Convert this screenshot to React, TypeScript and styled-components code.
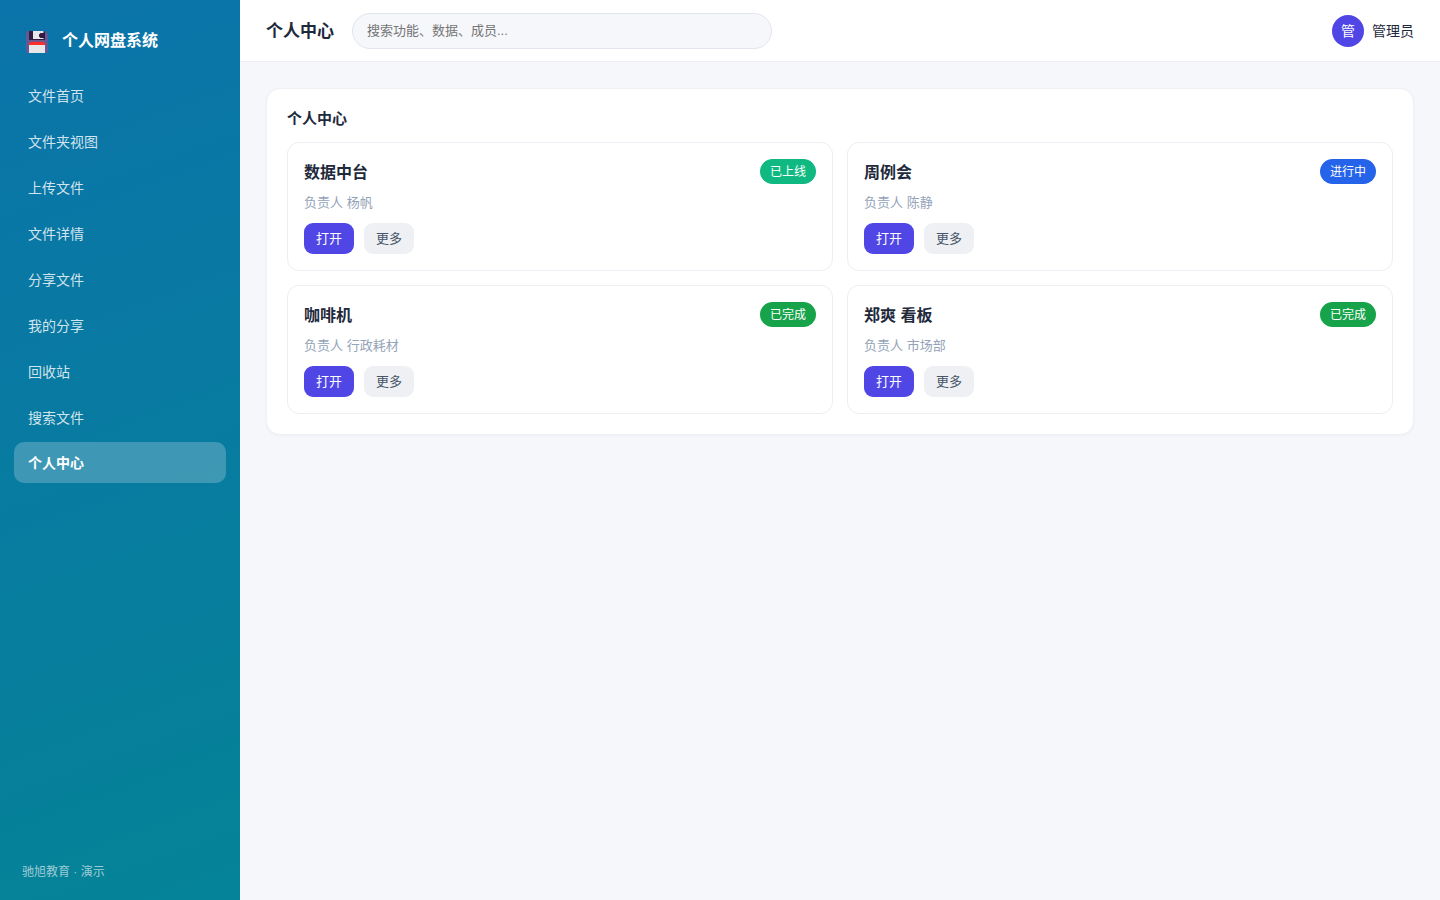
import React from "react";
import styled, { createGlobalStyle } from "styled-components";

const GlobalStyle = createGlobalStyle`
  *, *::before, *::after { box-sizing: border-box; }
  body {
    margin: 0;
    background: #f5f7fb;
    color: #1e293b;
    font-family: "Liberation Sans", "Noto Sans CJK SC", sans-serif;
    font-size: 14px;
    line-height: 20px;
  }
  button, input { font-family: inherit; }
  h1, h2, h3, p, ul { margin: 0; padding: 0; }
`;

const Shell = styled.div`
  display: flex;
  min-height: 100vh;
`;

const Sidebar = styled.aside`
  display: flex;
  flex-direction: column;
  flex: 0 0 240px;
  padding: 22px 14px 18px;
  background: linear-gradient(160deg, #0b74aa, #058397);
  color: #fff;
`;

const Brand = styled.div`
  display: flex;
  align-items: center;
  gap: 14px;
  height: 38px;
  margin-bottom: 14px;
  padding: 0 12px;
  font-size: 16px;
  font-weight: 700;
`;

const NavList = styled.ul`
  display: flex;
  flex-direction: column;
  gap: 4px;
  list-style: none;
`;

const NavLink = styled.a<{ $active: boolean }>`
  display: block;
  padding: 12px 14px 10px;
  border-radius: 10px;
  line-height: ${(p) => (p.$active ? 19 : 20)}px;
  color: ${(p) => (p.$active ? "#fff" : "rgba(255, 255, 255, 0.82)")};
  font-weight: ${(p) => (p.$active ? 700 : 400)};
  background: ${(p) => (p.$active ? "rgba(255, 255, 255, 0.22)" : "transparent")};
  text-decoration: none;
`;

const SideFooter = styled.footer`
  margin-top: auto;
  padding: 0 8px;
  font-size: 12px;
  color: rgba(255, 255, 255, 0.6);
`;

const Main = styled.div`
  flex: 1;
  min-width: 0;
`;

const TopBar = styled.header`
  display: flex;
  align-items: center;
  gap: 18px;
  height: 62px;
  padding: 0 26px;
  background: #fff;
  border-bottom: 1px solid #eceef3;
`;

const PageTitle = styled.h1`
  flex: none;
  padding-top: 2px;
  font-size: 17px;
  font-weight: 700;
`;

const Search = styled.input`
  width: 420px;
  min-width: 0;
  height: 36px;
  padding: 0 14px;
  border: 1px solid #e2e5ee;
  border-radius: 18px;
  background: #f5f7fb;
  color: #1e293b;
  font-size: 13px;
  &::placeholder { color: #757575; }
`;

const User = styled.div`
  display: flex;
  flex: none;
  align-items: center;
  gap: 8px;
  margin-left: auto;
`;

const Avatar = styled.span`
  display: grid;
  place-items: center;
  width: 32px;
  height: 32px;
  border-radius: 50%;
  background: #4f46e5;
  color: #fff;
`;

const Content = styled.main`
  padding: 26px;
`;

const Panel = styled.section`
  padding: 20px;
  border: 1px solid #eff1f5;
  border-radius: 14px;
  background: #fff;
  box-shadow: 0 1px 3px rgba(15, 23, 42, 0.04);
`;

const PanelTitle = styled.h2`
  margin-bottom: 14px;
  font-size: 15px;
  font-weight: 700;
  line-height: 19px;
`;

const CardGrid = styled.div`
  display: grid;
  grid-template-columns: repeat(2, minmax(0, 1fr));
  gap: 14px;
`;

const Card = styled.article`
  padding: 16px;
  border: 1px solid #eceef3;
  border-radius: 12px;
`;

const CardHead = styled.div`
  display: flex;
  align-items: center;
  justify-content: space-between;
`;

const CardTitle = styled.h3`
  padding-top: 2px;
  font-size: 16px;
  font-weight: 700;
`;

const Badge = styled.span<{ $color: string }>`
  padding: 1px 10px 0;
  border-radius: 13px;
  background: ${(p) => p.$color};
  color: #fff;
  font-size: 12px;
  line-height: 24px;
`;

const Meta = styled.p`
  margin: 9px 0 11px;
  color: #94a3b8;
  font-size: 13px;
  line-height: 19px;
`;

const Actions = styled.div`
  display: flex;
  gap: 10px;
`;

const Button = styled.button<{ $primary?: boolean }>`
  height: 31px;
  padding: 0 12px 2px;
  border: 0;
  border-radius: 9px;
  background: ${(p) => (p.$primary ? "#4f46e5" : "#eef0f4")};
  color: ${(p) => (p.$primary ? "#fff" : "#475569")};
  font-size: 13px;
  cursor: pointer;
`;

const FloppyIcon = () => (
  <svg width="22" height="24" viewBox="0 -2 22 24" aria-hidden="true">
    <path d="M2 0H19L22 3V20a2 2 0 0 1-2 2H2a2 2 0 0 1-2-2V2a2 2 0 0 1 2-2Z" fill="#635994" />
    <path d="M3 0H18L19 1V8a1 1 0 0 1-1 1H4a1 1 0 0 1-1-1Z" fill="#321b41" />
    <path d="M7 0H17.500V2H14.500L13 3.500V5.500L14.500 7H17.500V8H7Z" fill="#e7e7e9" />
    <path d="M5 10.700H17L19 12.500V14H3V12.500Z" fill="#fb302c" />
    <path d="M3 14H19V22H3Z" fill="#e7e7e9" />
  </svg>
);

const navItems = [
  "文件首页",
  "文件夹视图",
  "上传文件",
  "文件详情",
  "分享文件",
  "我的分享",
  "回收站",
  "搜索文件",
  "个人中心",
];

const cards = [
  { title: "数据中台", owner: "杨帆", status: "已上线", color: "#10b981" },
  { title: "周例会", owner: "陈静", status: "进行中", color: "#2563eb" },
  { title: "咖啡机", owner: "行政耗材", status: "已完成", color: "#16a34a" },
  { title: "郑爽 看板", owner: "市场部", status: "已完成", color: "#16a34a" },
];

export default function App() {
  const current = "个人中心";
  return (
    <>
      <GlobalStyle />
      <Shell>
        <Sidebar>
          <Brand>
            <FloppyIcon />
            <span>个人网盘系统</span>
          </Brand>
          <nav>
            <NavList>
              {navItems.map((item) => (
                <li key={item}>
                  <NavLink
                    href="#"
                    $active={item === current}
                    aria-current={item === current ? "page" : undefined}
                  >
                    {item}
                  </NavLink>
                </li>
              ))}
            </NavList>
          </nav>
          <SideFooter>驰旭教育 · 演示</SideFooter>
        </Sidebar>
        <Main>
          <TopBar>
            <PageTitle>{current}</PageTitle>
            <Search type="search" aria-label="搜索" placeholder="搜索功能、数据、成员..." />
            <User>
              <Avatar>管</Avatar>
              <span>管理员</span>
            </User>
          </TopBar>
          <Content>
            <Panel>
              <PanelTitle>{current}</PanelTitle>
              <CardGrid>
                {cards.map((card) => (
                  <Card key={card.title}>
                    <CardHead>
                      <CardTitle>{card.title}</CardTitle>
                      <Badge $color={card.color}>{card.status}</Badge>
                    </CardHead>
                    <Meta>负责人 {card.owner}</Meta>
                    <Actions>
                      <Button type="button" $primary>打开</Button>
                      <Button type="button">更多</Button>
                    </Actions>
                  </Card>
                ))}
              </CardGrid>
            </Panel>
          </Content>
        </Main>
      </Shell>
    </>
  );
}
